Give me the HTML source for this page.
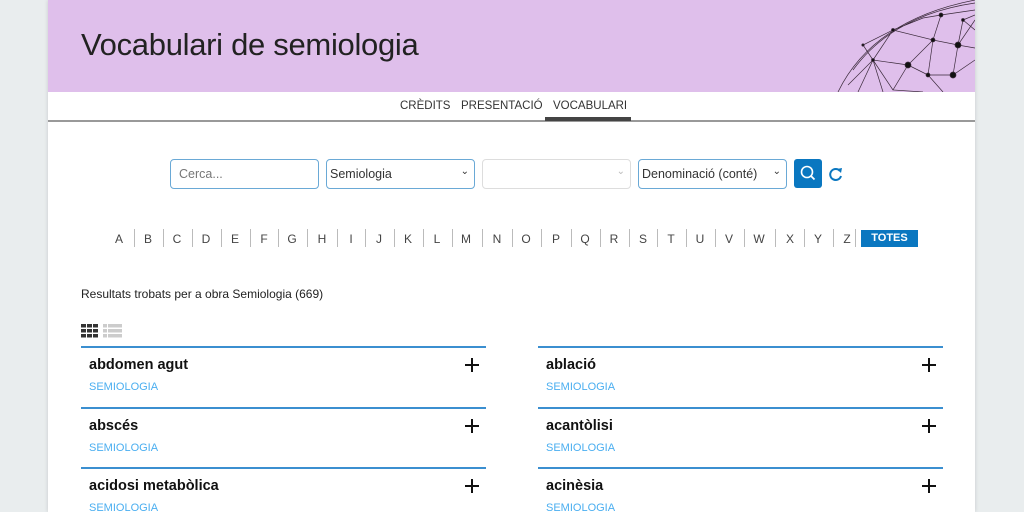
<!DOCTYPE html>
<html><head><meta charset="utf-8"><style>
*{box-sizing:border-box;margin:0;padding:0}
html,body{width:1024px;height:512px;overflow:hidden}
body{background:#e9edee;font-family:"Liberation Sans",sans-serif;position:relative}
#page{position:absolute;left:48px;top:0;width:927px;height:512px;background:#fff;box-shadow:0 0 4px rgba(0,0,0,.15)}
#hdr{position:absolute;left:0;top:0;width:927px;height:92px;background:#dfbfeb;overflow:hidden}
#hdr h1{position:absolute;left:33px;top:27px;font-weight:normal;font-size:31px;color:#222;letter-spacing:-0.3px}
#nav{position:absolute;left:0;top:92px;width:927px;height:30px;border-bottom:2px solid #999}
#nav span{position:absolute;top:8px;font-size:11.5px;color:#333}
.in{position:absolute;top:159px;height:30px;border:1px solid #6aa9d6;border-radius:4px;font-size:12.5px;color:#333;padding:7px 3px}
.ar{position:absolute;right:5px;top:6px;font-size:10px}
.l{position:absolute;top:232px;font-size:12px;color:#444;width:20px;text-align:center}
.sep{position:absolute;top:229px;width:1px;height:18px;background:#bbb}
.card{position:absolute;width:405px;height:61px;border-top:2px solid #3b8fd0}
.card b{position:absolute;left:8px;top:9px;font-size:14.5px;color:#111}
.card i{position:absolute;left:8px;top:33px;font-style:normal;font-size:11px;color:#4aaef0}
.card svg{position:absolute;right:7px;top:10px}
</style></head><body>
<div id="page">
<div id="hdr"><h1>Vocabulari de semiologia</h1>
<svg style="position:absolute;left:785px;top:0" width="142" height="92" stroke="#3a2a3a" stroke-width="0.7" fill="#111">
<path fill="none" d="M5 92 Q40 20 142 0 M25 92 L40 60 L75 65 L100 40 L125 45 L142 20 M40 60 L60 30 L100 40 L108 15 L142 10 M75 65 L95 75 L120 75 L142 60 M60 30 L90 18 L108 15 M95 75 L110 92 M120 75 L125 45 L142 48 M100 40 L95 75 M60 90 L75 65 M15 85 L40 60 L30 45 L60 30 M40 60 L60 90 M125 45 L130 20 L142 30 M75 65 L60 90 L90 92 M20 70 Q60 15 142 3 M50 92 L40 60 M130 20 L142 15"/>
<circle cx="75" cy="65" r="3"/><circle cx="125" cy="45" r="3"/><circle cx="120" cy="75" r="3"/><circle cx="100" cy="40" r="2"/><circle cx="40" cy="60" r="1.5"/><circle cx="95" cy="75" r="2"/><circle cx="60" cy="30" r="1.5"/><circle cx="108" cy="15" r="2"/><circle cx="30" cy="45" r="1.2"/><circle cx="130" cy="20" r="1.5"/></svg>
</div>
<div id="nav"><span style="left:352px">CRÈDITS</span><span style="left:413px">PRESENTACIÓ</span><span style="left:505px">VOCABULARI</span>
<div style="position:absolute;left:497px;top:25px;width:86px;height:4px;background:#444"></div></div>
<div class="in" style="left:122px;width:149px;color:#777;padding-left:8px">Cerca...</div>
<div class="in" style="left:278px;width:149px">Semiologia<span class="ar">⌄</span></div>
<div class="in" style="left:434px;width:149px;border-color:#ddd"><span class="ar" style="color:#bbb">⌄</span></div>
<div class="in" style="left:590px;width:149px">Denominació (conté)<span class="ar">⌄</span></div>
<div style="position:absolute;left:746px;top:159px;width:28px;height:29px;background:#0a77c0;border-radius:3px">
<svg width="28" height="29"><circle cx="13" cy="13" r="5.5" stroke="#fff" stroke-width="1.6" fill="none"/><path d="M17 17 L20.5 20.5" stroke="#fff" stroke-width="1.8"/></svg></div>
<svg style="position:absolute;left:780px;top:166px" width="16" height="16"><path d="M12 5 A5.5 5.5 0 1 0 13 10" stroke="#0a77c0" stroke-width="2" fill="none"/><path d="M9 3 L14 2 L13 7 Z" fill="#0a77c0"/></svg>
<div id="letters"></div>
<div style="position:absolute;left:813px;top:230px;width:57px;height:17px;background:#0a77c0;color:#fff;font-size:11px;font-weight:bold;text-align:center;line-height:17px">TOTES</div>
<div style="position:absolute;left:33px;top:287px;font-size:12px;color:#222">Resultats trobats per a obra Semiologia (669)</div>
<svg style="position:absolute;left:33px;top:324px" width="42" height="14">
<g fill="#333"><rect x="0" y="0" width="5" height="3.5"/><rect x="6" y="0" width="5" height="3.5"/><rect x="12" y="0" width="5" height="3.5"/><rect x="0" y="5" width="5" height="3.5"/><rect x="6" y="5" width="5" height="3.5"/><rect x="12" y="5" width="5" height="3.5"/><rect x="0" y="10" width="5" height="3.5"/><rect x="6" y="10" width="5" height="3.5"/><rect x="12" y="10" width="5" height="3.5"/></g>
<g fill="#ccc"><rect x="22" y="0" width="4" height="3.5"/><rect x="27" y="0" width="14" height="3.5"/><rect x="22" y="5" width="4" height="3.5"/><rect x="27" y="5" width="14" height="3.5"/><rect x="22" y="10" width="4" height="3.5"/><rect x="27" y="10" width="14" height="3.5"/></g></svg>
<div id="cards"></div>
</div>
<script>
var L="ABCDEFGHIJKLMNOPQRSTUVWXYZ".split(""),X=[119,148,177,206,235,264,292,322,351,379,408,437,466,497,526,556,585,614,643,671,700,729,759,790,818,847],h="";
for(var i=0;i<26;i++){h+='<div class="l" style="left:'+(X[i]-48-10)+'px">'+L[i]+'</div>';if(i<25)h+='<div class="sep" style="left:'+((X[i]+X[i+1])/2-48)+'px"></div>';}
h+='<div class="sep" style="left:'+(861-6-48)+'px"></div>';
document.getElementById("letters").innerHTML=h;
var C=[["abdomen agut",33,346],["ablació",490,346],["abscés",33,407],["acantòlisi",490,407],["acidosi metabòlica",33,467],["acinèsia",490,467]],c="";
var plus='<svg width="14" height="14"><path d="M7 0V14M0 7H14" stroke="#111" stroke-width="2"/></svg>';
C.forEach(function(a){c+='<div class="card" style="left:'+a[1]+'px;top:'+a[2]+'px"><b>'+a[0]+'</b><i>SEMIOLOGIA</i>'+plus+'</div>';});
document.getElementById("cards").innerHTML=c;
</script>
</body></html>
